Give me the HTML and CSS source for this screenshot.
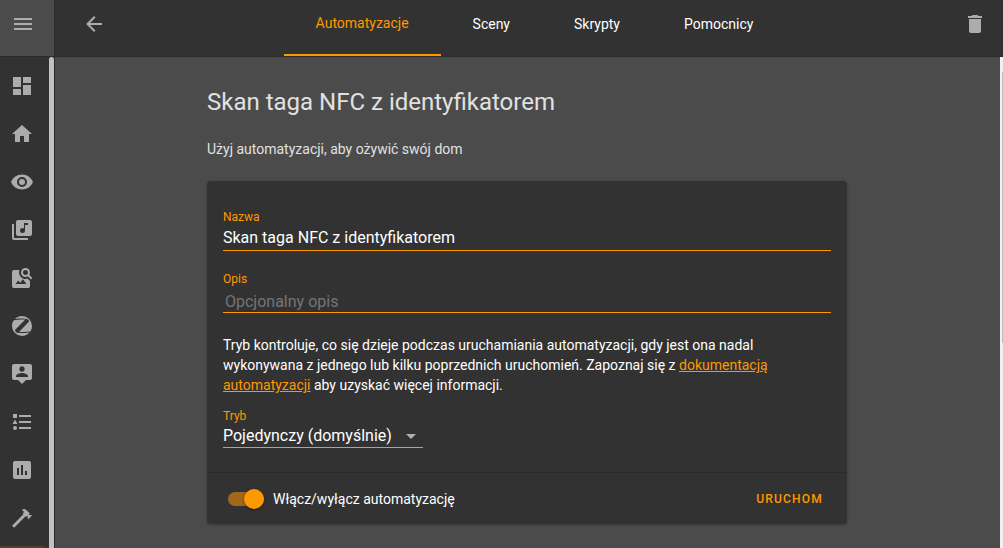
FILE: index.html
```html
<!DOCTYPE html>
<html lang="pl">
<head>
<meta charset="utf-8">
<meta name="viewport" content="width=device-width, initial-scale=1">
<title>Skan taga NFC z identyfikatorem</title>
<link rel="stylesheet" href="styles.css">
</head>
<body>
<div class="app">
  <div class="menu-bar">
    <button class="icon-button icon-button-menu" type="button" aria-label="Menu"><svg class="icon" viewBox="0 0 24 24"><path d="M3,6H21V8H3V6M3,11H21V13H3V11M3,16H21V18H3V16Z"/></svg></button>
  </div>
  <header class="toolbar">
    <button class="icon-button" type="button" aria-label="Wstecz"><svg class="icon" viewBox="0 0 24 24"><path d="M20,11V13H8L13.5,18.5L12.08,19.92L4.16,12L12.08,4.08L13.5,5.5L8,11H20Z"/></svg></button>
    <nav class="tabs">
      <a class="tab tab-active" href="#automatyzacje">Automatyzacje</a>
      <a class="tab" href="#sceny">Sceny</a>
      <a class="tab" href="#skrypty">Skrypty</a>
      <a class="tab" href="#pomocnicy">Pomocnicy</a>
    </nav>
    <button class="icon-button" type="button" aria-label="Usuń"><svg class="icon" viewBox="0 0 24 24"><path d="M19,4H15.5L14.5,3H9.5L8.5,4H5V6H19M6,19A2,2 0 0,0 8,21H16A2,2 0 0,0 18,19V7H6V19Z"/></svg></button>
  </header>
  <aside class="sidebar">
    <nav class="side-nav">
      <a class="side-item" href="#przeglad" aria-label="Przegląd"><svg class="icon" viewBox="0 0 24 24"><path d="M13,3V9H21V3M13,21H21V11H13M3,21H11V15H3M3,13H11V3H3V13Z"/></svg></a>
      <a class="side-item" href="#dom" aria-label="Dom"><svg class="icon" viewBox="0 0 24 24"><path d="M10,20V14H14V20H19V12H22L12,3L2,12H5V20H10Z"/></svg></a>
      <a class="side-item" href="#podglad" aria-label="Podgląd"><svg class="icon" viewBox="0 0 24 24"><path d="M12,9A3,3 0 0,0 9,12A3,3 0 0,0 12,15A3,3 0 0,0 15,12A3,3 0 0,0 12,9M12,17A5,5 0 0,1 7,12A5,5 0 0,1 12,7A5,5 0 0,1 17,12A5,5 0 0,1 12,17M12,4.5C7,4.5 2.73,7.61 1,12C2.73,16.39 7,19.5 12,19.5C17,19.5 21.27,16.39 23,12C21.27,7.61 17,4.5 12,4.5Z"/></svg></a>
      <a class="side-item" href="#muzyka" aria-label="Muzyka"><svg class="icon" viewBox="0 0 24 24"><path d="M20,2H8A2,2 0 0,0 6,4V16A2,2 0 0,0 8,18H20A2,2 0 0,0 22,16V4A2,2 0 0,0 20,2M18,7H15V12.5A2.5,2.5 0 0,1 12.5,15A2.5,2.5 0 0,1 10,12.5A2.5,2.5 0 0,1 12.5,10C13.07,10 13.58,10.19 14,10.5V5H18M4,6H2V20A2,2 0 0,0 4,22H18V20H4V6Z"/></svg></a>
      <a class="side-item" href="#obrazy" aria-label="Obrazy"><svg class="icon" viewBox="0 0 24 24"><path fill-rule="evenodd" d="M15.5,9C16.2,9 16.79,8.76 17.27,8.27C17.76,7.79 18,7.2 18,6.5C18,5.83 17.76,5.23 17.27,4.73C16.79,4.23 16.2,4 15.5,4C14.83,4 14.23,4.23 13.73,4.73C13.23,5.23 13,5.83 13,6.5C13,7.2 13.23,7.79 13.73,8.27C14.23,8.76 14.83,9 15.5,9M19.31,8.91L22.41,12L21,13.41L17.86,10.31C17.08,10.78 16.28,11 15.47,11C14.22,11 13.16,10.58 12.3,9.7C11.45,8.83 11,7.77 11,6.5C11,5.27 11.45,4.2 12.33,3.33C13.2,2.45 14.27,2 15.5,2C16.77,2 17.83,2.45 18.7,3.33C19.58,4.2 20,5.27 20,6.5C20,7.33 19.78,8.13 19.31,8.91M16.5,18H5.5L8.25,14.5L10.22,16.83L12.94,13.31L16.5,18M18,13L20,15V20C20,20.55 19.81,21 19.41,21.4C19,21.79 18.53,22 18,22H4C3.45,22 3,21.79 2.6,21.4C2.21,21 2,20.55 2,20V6C2,5.47 2.21,5 2.6,4.59C3,4.19 3.45,4 4,4H9.5C9.2,4.64 9.03,5.31 9,6C9,7.93 9.64,9.56 10.94,10.9C12.23,12.23 13.77,12.94 15.5,13C16.4,13 17.23,12.83 18,12.5V13Z"/></svg></a>
      <a class="side-item" href="#zigbee" aria-label="Zigbee"><svg class="icon" viewBox="0 0 24 24"><path d="M4.06,6.15C3.97,6.17 3.88,6.22 3.8,6.28C2.66,7.9 2,9.87 2,12A10,10 0 0,0 12,22C15,22 17.68,20.68 19.5,18.6L17,18.85C14.25,19.15 11.45,19.19 8.66,18.96C7.95,18.94 7.24,18.76 6.59,18.45C5.73,18.06 5.15,17.23 5.07,16.29C5.06,16.13 5.12,16 5.23,15.87L7.42,13.6L15.03,5.7V5.6H10.84C8.57,5.64 6.31,5.82 4.06,6.15M20.17,17.5C20.26,17.47 20.35,17.44 20.43,17.39C21.42,15.83 22,14 22,12A10,10 0 0,0 12,2C9.22,2 6.7,3.13 4.89,4.97H5.17C8.28,4.57 11.43,4.47 14.56,4.65C15.5,4.64 16.45,4.82 17.33,5.17C18.25,5.53 18.89,6.38 19,7.37C19,7.53 18.93,7.7 18.82,7.82L9.71,17.19L9,17.95V18.06H13.14C15.5,18 17.84,17.81 20.17,17.5Z"/></svg></a>
      <a class="side-item" href="#mapa" aria-label="Mapa"><svg class="icon" viewBox="0 0 24 24"><path d="M20,2H4A2,2 0 0,0 2,4V16A2,2 0 0,0 4,18H8L12,22L16,18H20A2,2 0 0,0 22,16V4A2,2 0 0,0 20,2M12,4.3C13.5,4.3 14.7,5.5 14.7,7C14.7,8.5 13.5,9.7 12,9.7C10.5,9.7 9.3,8.5 9.3,7C9.3,5.5 10.5,4.3 12,4.3M18,15H6V14.1C6,12.1 10,11 12,11C14,11 18,12.1 18,14.1V15Z"/></svg></a>
      <a class="side-item" href="#dziennik" aria-label="Dziennik"><svg class="icon" viewBox="0 0 24 24"><path d="M5,9.5L7.5,14H2.5L5,9.5M3,4H7V8H3V4M5,20A2,2 0 0,0 7,18A2,2 0 0,0 5,16A2,2 0 0,0 3,18A2,2 0 0,0 5,20M9,5V7H21V5H9M9,19H21V17H9V19M9,13H21V11H9V13Z"/></svg></a>
      <a class="side-item" href="#historia" aria-label="Historia"><svg class="icon" viewBox="0 0 24 24"><path d="M9,17H7V10H9V17M13,17H11V7H13V17M17,17H15V13H17V17M19,3H5A2,2 0 0,0 3,5V19A2,2 0 0,0 5,21H19A2,2 0 0,0 21,19V5A2,2 0 0,0 19,3Z"/></svg></a>
      <a class="side-item" href="#narzedzia" aria-label="Narzędzia deweloperskie"><svg class="icon" viewBox="0 0 24 24"><path d="M2,19.63L13.43,8.2L12.72,7.5L14.14,6.07L12,3.89C13.2,2.7 15.09,2.7 16.27,3.89L19.87,7.5L18.45,8.91H21.29L22,9.62L18.45,13.21L17.74,12.5V9.62L16.27,11.04L15.56,10.33L4.13,21.76L2,19.63Z"/></svg></a>
      <a class="side-item side-item-active" href="#konfiguracja" aria-label="Konfiguracja"></a>
    </nav>
    <div class="side-scroll"></div>
  </aside>
  <main class="content">
    <div class="page">
      <h1 class="title">Skan taga NFC z identyfikatorem</h1>
      <p class="intro">Użyj automatyzacji, aby ożywić swój dom</p>
      <form class="card">
        <div class="card-body">
          <div class="field">
            <label class="label" for="name">Nazwa</label>
            <input class="control" id="name" type="text" value="Skan taga NFC z identyfikatorem">
          </div>
          <div class="field">
            <label class="label" for="description">Opis</label>
            <textarea class="control control-area" id="description" rows="1" placeholder="Opcjonalny opis"></textarea>
          </div>
          <p class="help">Tryb kontroluje, co się dzieje podczas uruchamiania automatyzacji, gdy jest ona nadal wykonywana z jednego lub kilku poprzednich uruchomień. Zapoznaj się z <a class="link" href="#dokumentacja">dokumentacją automatyzacji</a> aby uzyskać więcej informacji.</p>
          <div class="field field-mode">
            <label class="label" for="mode">Tryb</label>
            <select class="control control-select" id="mode"><option>Pojedynczy (domyślnie)</option></select>
            <svg class="caret" viewBox="0 0 24 24"><path d="M7,10L12,15L17,10H7Z"/></svg>
          </div>
        </div>
        <div class="card-actions">
          <label class="toggle"><input class="switch" type="checkbox" role="switch" checked>Włącz/wyłącz automatyzację</label>
          <button class="run" type="button">URUCHOM</button>
        </div>
      </form>
    </div>
    <div class="page-scroll"><div class="page-thumb"></div></div>
  </main>
</div>
</body>
</html>
```
FILE: styles.css
```css
* {
  box-sizing: border-box;
}

body {
  margin: 0;
  background: #4b4b4b;
  color: #fff;
  font: 14px/20px Roboto, sans-serif;
}

.app {
  display: grid;
  grid-template-columns: 54px 1fr;
  grid-template-rows: 57px 1fr;
  height: 100vh;
  overflow: hidden;
}

.icon {
  display: block;
  width: 24px;
  height: 24px;
  fill: #acacac;
}

.icon-button {
  width: 48px;
  height: 48px;
  padding: 12px;
  border: 0;
  background: none;
}

.icon-button-menu {
  width: 46px;
  padding: 12px 11px;
}

.menu-bar {
  border-bottom: 1px solid #2b2b2b;
  box-shadow: 1px 0 #2b2b2b;
  z-index: 1;
}

.toolbar {
  display: flex;
  padding: 0 4px 0 16px;
  background: #323232;
  border-bottom: 1px solid #2b2b2b;
}

.tabs {
  display: flex;
  flex: 1;
  justify-content: center;
}

.tab {
  display: flex;
  align-items: center;
  padding: 0 32px 8px;
  color: #fff;
  text-decoration: none;
}

.tab-active {
  color: #ff9800;
  border-bottom: 2px solid #ff9800;
}

.sidebar {
  display: flex;
  min-height: 0;
  background: #323232;
  box-shadow: 1px 0 #2b2b2b;
  z-index: 1;
}

.side-nav {
  display: flex;
  flex: 1;
  flex-direction: column;
  gap: 8px;
  padding: 9px 3px 0 0;
  overflow: hidden;
}

.side-item {
  flex: none;
  height: 40px;
  padding: 8px 10px;
  border-radius: 0 4px 4px 0;
}

.side-item-active {
  background: #4f412f;
}

.side-scroll {
  width: 5px;
  border-radius: 3px 3px 0 0;
  background: #c1c1c1;
}

.content {
  display: flex;
  min-height: 0;
}

.page {
  flex: 1;
  padding: 29px 16px;
}

.title,
.intro,
.card {
  max-width: 640px;
  margin: 0 auto;
}

.title {
  color: #e1e1e1;
  font-size: 24px;
  font-weight: 400;
  line-height: 32px;
}

.intro {
  margin-top: 21px;
  color: #e1e1e1;
}

.card {
  margin-top: 22px;
  border-radius: 4px;
  background: #323232;
  box-shadow: 0 1px 3px rgba(0, 0, 0, 0.25);
}

.card-body {
  display: flex;
  flex-direction: column;
  gap: 18px;
  padding: 26px 16px 24px;
}

.field {
  display: flex;
  flex-direction: column;
}

.label {
  color: #ff9800;
  font-size: 12px;
}

.control {
  width: 100%;
  height: 24px;
  padding: 0 0 2px;
  border: 0;
  border-bottom: 1px solid #ff9800;
  border-radius: 0;
  outline: 0;
  background: none;
  color: #fff;
  font: 16px/20px Roboto, sans-serif;
  appearance: none;
}

.control-area {
  padding: 3px 2px 0;
  overflow: hidden;
  resize: none;
}

.control-area::placeholder {
  color: #757575;
}

.control-select {
  height: 22px;
}

.help {
  margin: 4px 0 -7px;
}

.link {
  color: #ff9800;
}

.field-mode {
  position: relative;
  width: 200px;
}

.caret {
  position: absolute;
  right: 0;
  bottom: 0;
  width: 24px;
  height: 24px;
  fill: #b0b0b0;
  pointer-events: none;
}

.card-actions {
  display: flex;
  align-items: center;
  justify-content: space-between;
  height: 52px;
  padding: 0 24px 0 21px;
  border-top: 1px solid #2b2b2b;
}

.toggle {
  display: flex;
  align-items: center;
  gap: 9px;
}

.switch {
  display: flex;
  align-items: center;
  justify-content: flex-end;
  width: 36px;
  height: 14px;
  margin: 0;
  border-radius: 7px;
  background: #a1671a;
  appearance: none;
}

.switch::before {
  content: "";
  width: 20px;
  height: 20px;
  border-radius: 50%;
  background: #ff9800;
  box-shadow: 0 1px 3px rgba(0, 0, 0, 0.4);
}

.run {
  padding: 0;
  border: 0;
  background: none;
  color: #ff9800;
  font: 500 12px/20px Roboto, sans-serif;
  letter-spacing: 0.1em;
}

.page-scroll {
  width: 3px;
  padding: 15px 0 0 2px;
  background: #f1f1f1;
}

.page-thumb {
  height: 57%;
  background: #bdbdbd;
}
```
